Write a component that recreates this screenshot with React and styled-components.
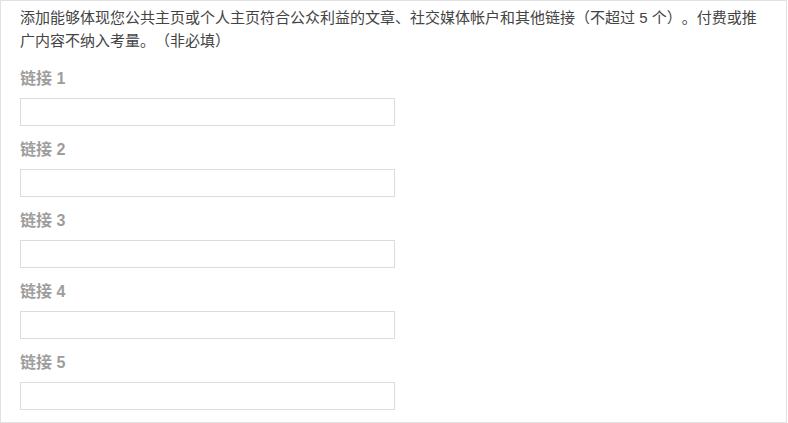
import React from 'react';
import styled, { createGlobalStyle } from 'styled-components';

const GlobalStyle = createGlobalStyle`
  html, body {
    margin: 0;
    padding: 0;
    background: #ffffff;
  }
  body {
    font-family: "Liberation Sans", "Noto Sans CJK SC", sans-serif;
  }
`;

const Panel = styled.div`
  width: 787px;
  height: 423px;
  box-sizing: border-box;
  border: 1px solid #e2e2e2;
  padding: 5px 19px 0 19px;
  background: #fff;
  overflow: hidden;
`;

const Intro = styled.p`
  margin: 0 0 16px 0;
  font-size: 15px;
  line-height: 23px;
  color: #444;
  text-spacing-trim: space-all;
  font-feature-settings: "halt" 0, "palt" 0;
`;

const Fields = styled.div`
  display: flex;
  flex-direction: column;
  gap: 13px;
`;

const Field = styled.div`
  display: flex;
  flex-direction: column;
  gap: 8px;
`;

const Label = styled.label`
  font-size: 16px;
  line-height: 22px;
  font-weight: bold;
  color: #9d9d9d;
`;

const Input = styled.input`
  width: 375px;
  height: 28px;
  box-sizing: border-box;
  border: 1px solid #dcdcdc;
  border-radius: 0;
  padding: 0 8px;
  font-size: 14px;
  outline: none;
  background: #fff;
`;

const links = [1, 2, 3, 4, 5];

const App = () => {
  return (
    <>
      <GlobalStyle />
      <Panel>
        <Intro>
          添加能够体现您公共主页或个人主页符合公众利益的文章、社交媒体帐户和其他链接（不超过 5 个）。付费或推广内容不纳入考量。（非必填）
        </Intro>
        <Fields>
          {links.map((n) => (
            <Field key={n}>
              <Label htmlFor={`link-${n}`}>链接 {n}</Label>
              <Input id={`link-${n}`} type="text" />
            </Field>
          ))}
        </Fields>
      </Panel>
    </>
  );
};

export default App;
